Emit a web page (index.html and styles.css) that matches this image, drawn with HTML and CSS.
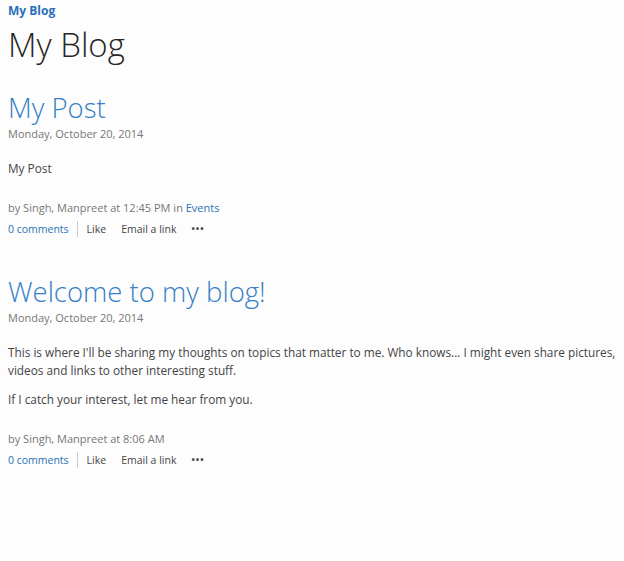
FILE: index.html
```html
<!DOCTYPE html>
<html lang="en">
<head>
    <meta charset="UTF-8">
    <title>My Blog</title>
    <link rel="stylesheet" href="styles.css">
</head>
<body>
    <div class="breadcrumb"><a href="#">My Blog</a></div>
    <h1 class="site-title">My Blog</h1>

    <div class="post">
        <h2 class="post-title"><a href="#">My Post</a></h2>
        <div class="post-date">Monday, October 20, 2014</div>
        <div class="post-body">
            <p>My Post</p>
        </div>
        <div class="post-byline">by Singh, Manpreet at 12:45 PM in <a href="#">Events</a></div>
        <div class="post-actions">
            <a href="#" class="comments">0 comments</a>
            <span class="action">Like</span>
            <span class="action">Email a link</span>
            <span class="action more">&bull;&bull;&bull;</span>
        </div>
    </div>

    <div class="post">
        <h2 class="post-title"><a href="#">Welcome to my blog!</a></h2>
        <div class="post-date">Monday, October 20, 2014</div>
        <div class="post-body">
            <p>This is where I'll be sharing my thoughts on topics that matter to me. Who knows... I might even share pictures, videos and links to other interesting stuff.</p>
            <p>If I catch your interest, let me hear from you.</p>
        </div>
        <div class="post-byline">by Singh, Manpreet at 8:06 AM</div>
        <div class="post-actions">
            <a href="#" class="comments">0 comments</a>
            <span class="action">Like</span>
            <span class="action">Email a link</span>
            <span class="action more">&bull;&bull;&bull;</span>
        </div>
    </div>
</body>
</html>
```

FILE: styles.css
```css
body {
    margin: 0;
    padding: 0 0 0 8px;
    background: #fdfdfd;
    font-family: "Open Sans", Arial, sans-serif;
    color: #444;
}
a {
    color: #2a72b8;
    text-decoration: none;
}
.breadcrumb {
    font-size: 12px;
    font-weight: bold;
    line-height: 16px;
    padding-top: 3px;
}
.breadcrumb a {
    color: #2a6ebb;
}
.site-title {
    margin: 2px 0 0;
    font-size: 33px;
    font-weight: 300;
    line-height: 48px;
    color: #262626;
}
.post {
    margin-top: 21px;
}
.post + .post {
    margin-top: 37px;
}
.post-title {
    margin: 0;
    font-size: 27.5px;
    font-weight: 300;
    line-height: 36px;
}
.post-title a {
    color: #3580c6;
}
.post-date {
    font-size: 11px;
    color: #777;
    line-height: 16px;
}
.post-body {
    font-size: 11.8px;
    color: #444;
    margin-top: 17px;
}
.post-body p {
    margin: 0 0 11px;
    line-height: 18px;
}
.post-byline {
    margin-top: 23px;
    font-size: 11px;
    color: #777;
    line-height: 16px;
}
.post-actions {
    display: flex;
    align-items: center;
    font-size: 10.5px;
    line-height: 16px;
    margin-top: 5px;
    color: #444;
}
.post-actions .comments {
    padding-right: 8px;
    border-right: 1px solid #ccc;
}
.post-actions .action {
    margin-left: 9px;
    margin-right: 6px;
}
.post-actions .more {
    font-size: 9px;
    font-weight: bold;
    letter-spacing: 1px;
}
```
